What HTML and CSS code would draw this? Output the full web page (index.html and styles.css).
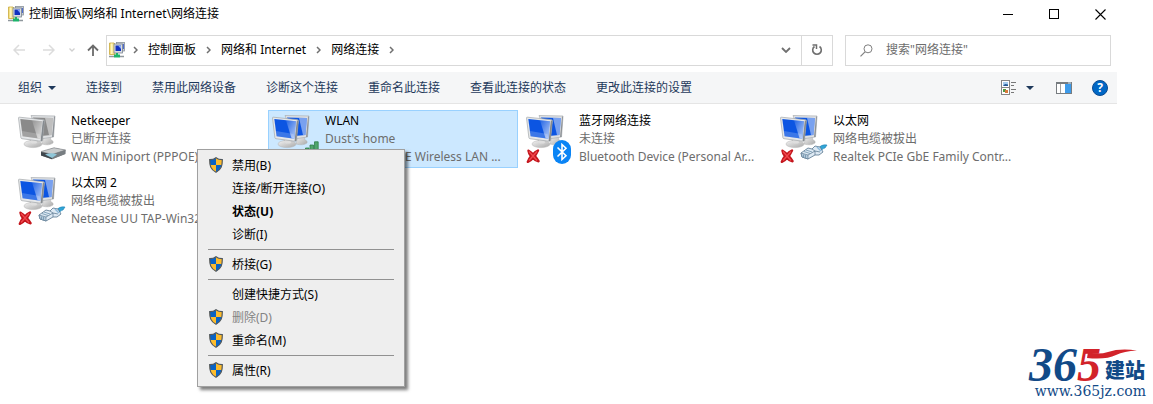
FILE: index.html
```html
<!DOCTYPE html>
<html lang="zh-CN">
<head>
    <meta charset="UTF-8">
    <meta name="viewport" content="width=device-width, initial-scale=1.0">
    <title>网络连接</title>
    <link rel="stylesheet" href="styles.css">
</head>
<body>
    <!-- Shared icons -->
    <svg class="sprite" width="0" height="0" aria-hidden="true">
        <defs>
            <linearGradient id="stand" x1="0" y1="0" x2="1" y2="1">
                <stop offset="0" stop-color="#f4f4f4"/>
                <stop offset="1" stop-color="#a8a8a8"/>
            </linearGradient>
            <linearGradient id="glare" x1="0" y1="0" x2="1" y2="1">
                <stop offset="0" stop-color="#fff" stop-opacity="0.1"/>
                <stop offset="1" stop-color="#fff" stop-opacity="0.7"/>
            </linearGradient>
            <symbol id="monitors" viewBox="0 0 48 52">
                <path d="M26 24 L32 24 L33 28 Q36 29 35 31 Q31 34 24 32 Z" fill="url(#stand)" stroke="#b0b0b0" stroke-width="0.5"/>
                <path d="M13 3.500 L37 4 L35.500 25 L22 27 Z" fill="#dfe1e3" stroke="#a9adb1" stroke-width="0.7"/>
                <path d="M15 5.500 L35 6 L33.500 23 L23 24 Z" fill="currentColor"/>
                <path d="M27 6 L35 6 L33.500 23 L31 23 Z" fill="#fff" opacity="0.45"/>
                <path d="M36 5 L37 4 L35.500 25 L34 25 Z" fill="#8e9297"/>
                <path d="M11 25 L19 26 L20 30 L12 30 Z" fill="#c8c8c8"/>
                <ellipse cx="15" cy="32" rx="9" ry="3.600" fill="url(#stand)" stroke="#b4b4b4" stroke-width="0.5"/>
                <path d="M13 26 L18 27 L19 31 Q16 32 13 31 Z" fill="#dedede"/>
                <path d="M0.500 6 Q0.500 5 1.500 5.200 L25.500 7.700 Q26.500 7.900 26.400 8.900 L24.400 28.500 Q24.200 29.500 23.200 29.300 L4 26.700 Q3 26.500 2.900 25.700 Z" fill="#e6e8ea" stroke="#a3a7ab" stroke-width="0.7"/>
                <path d="M26.500 8.500 L24.300 29 L22.600 29 L24.800 8.500 Z" fill="#868b90"/>
                <path d="M2.300 7 L24 9.300 L22.300 26.700 L4.600 24.200 Z" fill="currentColor"/>
                <path d="M14 8.300 L24 9.300 L22.300 26.700 L19.500 26.300 Z" fill="url(#glare)"/>
                <path d="M4 19 L21.500 22 L22.300 26.700 L4.600 24.200 Z" fill="#fff" opacity="0.2"/>
            </symbol>
            <symbol id="cross" viewBox="0 0 14 14">
                <path d="M2.500 1.800 Q5.500 3.500 7 5.500 Q9 2.800 12 1.500 Q10.500 4.500 8.800 7 Q11 9.500 12.500 12.200 Q9 11.500 6.900 9 Q5 11.500 1.800 12.800 Q3 9.500 5 7.200 Q3 5 2.500 1.800 Z" fill="#d71f27" stroke="#c3151c" stroke-width="2.400" stroke-linejoin="round"/>
                <path d="M3 2.500 L11 11.500 M11 2.500 L3 11.500" stroke="#f0474d" stroke-width="1.400"/>
            </symbol>
            <symbol id="cable" viewBox="0 0 28 18">
                <path d="M18 6 Q21 1 27 2 L25 5 Q22 5 21 9 Z" fill="#31a5d6" stroke="#1d80b4" stroke-width="0.6"/>
                <path d="M1 10 L8 5 L12 6 L15 3 L20 4 L23 9 L19 12 L15 12 L8 16 L2 14 Z" fill="#dde9f3" stroke="#56748d" stroke-width="0.8"/>
                <path d="M1 10 L8 12 L8 16 L2 14 Z" fill="#b5cada" stroke="#56748d" stroke-width="0.6"/>
                <path d="M8 12 L15 8 L20 9 M12 6 L15 8 M15 8 L15 12" fill="none" stroke="#56748d" stroke-width="0.7"/>
                <path d="M4 8.500 L10 10.500 M6 7 L12 9 M3.500 11.500 V14 M5.500 12 V15" stroke="#6f93ad" stroke-width="0.8"/>
                <path d="M17 4 L21 8" stroke="#8cb9dc" stroke-width="1.500"/>
            </symbol>
            <symbol id="shield" viewBox="0 0 14 16">
                <path d="M7 0.700 C5.500 2 3 2.700 0.700 2.700 C0.600 8.500 1.500 12.500 7 15.300 C12.500 12.500 13.400 8.500 13.300 2.700 C11 2.700 8.500 2 7 0.700 Z" fill="#fdbc2c"/>
                <path d="M7 1 C5.500 2 3 2.700 1 2.800 Q0.900 6 1.400 8 H7 Z" fill="#0a63c4"/>
                <path d="M7 8 H12.600 C11.800 11.500 10 13.700 7 15.200 Z" fill="#0a63c4"/>
                <path d="M7 0.700 C5.500 2 3 2.700 0.700 2.700 C0.600 8.500 1.500 12.500 7 15.300 C12.500 12.500 13.400 8.500 13.300 2.700 C11 2.700 8.500 2 7 0.700 Z" fill="none" stroke="#505860" stroke-width="1.200"/>
            </symbol>
            <symbol id="net-folder" viewBox="0 0 16 16">
                <path d="M0.500 1 H5 L6 2 V12.500 H0.500 Z" fill="#f5e184" stroke="#c9a93e" stroke-width="0.800"/>
                <path d="M2 1.500 H3.500 V12 H2 Z" fill="#fff6bd"/>
                <rect x="7.500" y="0.500" width="8" height="8.500" fill="#c9cfd6" stroke="#8a929b" stroke-width="0.800"/>
                <path d="M13.500 2 H15 V7 H13.500 Z" fill="#4e6bd2"/>
                <rect x="5" y="2" width="8.500" height="9" fill="#d8dde3" stroke="#7a838e" stroke-width="0.800"/>
                <rect x="6.500" y="3.500" width="5.500" height="5.500" fill="#1231c0"/>
                <path d="M9 3.500 H12 V7 Z" fill="#88a8f5"/>
                <path d="M7 11 H9 V12.500 H11 V15.500 H5 V12.500 H7 Z" fill="#1cb36b"/>
                <path d="M0 14.500 H5 M11 14.500 H15" stroke="#8f979d" stroke-width="1.500"/>
            </symbol>
            <symbol id="crumb" viewBox="0 0 5 8">
                <path d="M1 1 L4 4 L1 7" fill="none" stroke="#707070" stroke-width="1.500"/>
            </symbol>
            <symbol id="caret" viewBox="0 0 8 4">
                <path d="M0 0 H8 L4 4 Z" fill="#1e395b"/>
            </symbol>
        </defs>
    </svg>

    <div class="window">
        <header class="titlebar">
            <svg class="icon16"><use href="#net-folder"/></svg>
            <h1 class="title">控制面板\网络和 Internet\网络连接</h1>
            <div class="window-buttons">
                <button type="button" aria-label="最小化"><svg width="10" height="10"><path d="M0 5.500 H10" stroke="#000"/></svg></button>
                <button type="button" aria-label="最大化"><svg width="10" height="10"><rect x="0.500" y="0.500" width="9" height="9" fill="none" stroke="#000"/></svg></button>
                <button type="button" aria-label="关闭"><svg width="11" height="11"><path d="M0.500 0.500 L10.500 10.500 M10.500 0.500 L0.500 10.500" stroke="#000" stroke-width="1.100"/></svg></button>
            </div>
        </header>

        <div class="navbar">
            <div class="history">
                <button type="button" aria-label="后退"><svg width="12" height="12"><path d="M12 6 H1 M6 1 L1 6 L6 11" fill="none" stroke="#dcdcdc" stroke-width="1.500"/></svg></button>
                <button type="button" aria-label="前进"><svg width="12" height="12"><path d="M0 6 H11 M6 1 L11 6 L6 11" fill="none" stroke="#dcdcdc" stroke-width="1.500"/></svg></button>
                <button type="button" class="recent" aria-label="最近位置"><svg width="6" height="4"><path d="M0.500 0.500 L3 3 L5.500 0.500" fill="none" stroke="#d0d0d0" stroke-width="1.300"/></svg></button>
                <button type="button" aria-label="向上"><svg width="12" height="12"><path d="M6 12 V1.500 M1 6.500 L6 1.500 L11 6.500" fill="none" stroke="#6b6b6b" stroke-width="1.800"/></svg></button>
            </div>
            <div class="address">
                <svg class="icon16"><use href="#net-folder"/></svg>
                <nav class="crumbs">
                    <svg class="crumb"><use href="#crumb"/></svg>
                    <a href="#">控制面板</a>
                    <svg class="crumb"><use href="#crumb"/></svg>
                    <a href="#">网络和 Internet</a>
                    <svg class="crumb"><use href="#crumb"/></svg>
                    <a href="#">网络连接</a>
                    <svg class="crumb"><use href="#crumb"/></svg>
                </nav>
                <button type="button" class="history-drop" aria-label="历史记录"><svg width="10" height="6"><path d="M1 1 L5 5 L9 1" fill="none" stroke="#707070" stroke-width="1.800"/></svg></button>
                <button type="button" class="refresh" aria-label="刷新"><svg width="12" height="12"><path d="M8.500 2.500 A4.300 4.300 0 1 1 3.500 2.500" fill="none" stroke="#6f6f6f" stroke-width="1.600"/><path d="M1.500 1 H5.500 V5" fill="none" stroke="#6f6f6f" stroke-width="1.500"/></svg></button>
            </div>
            <label class="search">
                <svg width="13" height="13"><circle cx="8" cy="4.800" r="4" fill="none" stroke="#808080"/><path d="M5 7.800 L0.500 12.300" stroke="#808080" stroke-width="1.200"/></svg>
                <input type="text" placeholder='搜索"网络连接"' aria-label="搜索">
            </label>
        </div>

        <div class="toolbar">
            <button type="button">组织<svg class="caret"><use href="#caret"/></svg></button>
            <button type="button">连接到</button>
            <button type="button">禁用此网络设备</button>
            <button type="button">诊断这个连接</button>
            <button type="button">重命名此连接</button>
            <button type="button">查看此连接的状态</button>
            <button type="button">更改此连接的设置</button>
            <div class="view-buttons">
                <button type="button" class="views" aria-label="更改视图">
                    <svg width="16" height="16">
                        <rect x="0.500" y="0.500" width="8" height="14" fill="#fff" stroke="#858585"/>
                        <path d="M0.500 7.500 H8.500" stroke="#858585"/>
                        <rect x="2" y="2" width="5" height="4" fill="#a5cdf0"/><path d="M2 6 L4 4 L7 4.500 V6 Z" fill="#245894"/>
                        <rect x="2" y="9" width="3" height="3" fill="#4d9a43"/><rect x="4" y="10" width="3" height="3" fill="#d9793c"/>
                        <path d="M10 2.500 H15 M10 5.500 H13 M10 9.500 H15 M10 12.500 H13" stroke="#777"/>
                    </svg>
                    <svg class="caret"><use href="#caret"/></svg>
                </button>
                <button type="button" aria-label="预览窗格">
                    <svg width="16" height="12"><rect x="0.500" y="0.500" width="15" height="11" fill="#fff" stroke="#777c80"/><path d="M0 1.500 H16" stroke="#777c80"/><path d="M4.500 2 V11" stroke="#a3a3a3"/><rect x="9" y="2" width="6" height="9" fill="#3d9bea"/><path d="M12 1 H15" stroke="#c9e3f8"/></svg>
                </button>
                <button type="button" class="help" aria-label="帮助">?</button>
            </div>
        </div>

        <main class="connections">
            <article class="connection offline">
                <div class="art">
                    <svg class="monitors"><use href="#monitors"/></svg>
                    <svg class="badge-modem" viewBox="0 0 26 13">
                        <path d="M1 5 L14 0.800 L25.500 3 L25 7 L12 12.300 L1 8.500 Z" fill="#888d90"/>
                        <path d="M1 4.500 L14 0.800 L25.500 3 L12 7.500 Z" fill="#c9cccd" stroke="#7d8184" stroke-width="0.600"/>
                        <path d="M1 5 L12 7.500 V12.300 L1 8.500 Z" fill="#3f474d"/>
                        <path d="M12 7.500 L25.500 3 V7 L12 12.300 Z" fill="#777d81"/>
                        <path d="M5 7.500 Q12 5 17 7.500 L12 11 Z" fill="#8fc6d8"/>
                    </svg>
                </div>
                <div class="details"><h2>Netkeeper</h2><p>已断开连接</p><p>WAN Miniport (PPPOE)</p></div>
            </article>
            <article class="connection selected">
                <div class="art">
                    <svg class="monitors"><use href="#monitors"/></svg>
                    <svg class="badge-signal" viewBox="0 0 14 16"><path d="M0.500 7 H4 V15.500 H0.500 Z M5 4 H8.500 V15.500 H5 Z M9.500 0.800 H13.200 V15.500 H9.500 Z" fill="#50a56b" stroke="#2f7d4a" stroke-width="0.800"/></svg>
                </div>
                <div class="details"><h2>WLAN</h2><p>Dust's home</p><p>Realtek 8822BE Wireless LAN ...</p></div>
            </article>
            <article class="connection">
                <div class="art">
                    <svg class="monitors"><use href="#monitors"/></svg>
                    <svg class="badge-cross"><use href="#cross"/></svg>
                    <svg class="badge-bluetooth" viewBox="0 0 18 24"><rect width="18" height="24" rx="9" fill="#0a84f5"/><path d="M4.500 7.500 L13 15.800 L9 19.500 V4.500 L13 8.200 L4.500 16.500" fill="none" stroke="#fff" stroke-width="1.600"/></svg>
                </div>
                <div class="details"><h2>蓝牙网络连接</h2><p>未连接</p><p>Bluetooth Device (Personal Ar...</p></div>
            </article>
            <article class="connection">
                <div class="art">
                    <svg class="monitors"><use href="#monitors"/></svg>
                    <svg class="badge-cross"><use href="#cross"/></svg>
                    <svg class="badge-cable"><use href="#cable"/></svg>
                </div>
                <div class="details"><h2>以太网</h2><p>网络电缆被拔出</p><p>Realtek PCIe GbE Family Contr...</p></div>
            </article>
            <article class="connection">
                <div class="art">
                    <svg class="monitors"><use href="#monitors"/></svg>
                    <svg class="badge-cross"><use href="#cross"/></svg>
                    <svg class="badge-cable"><use href="#cable"/></svg>
                </div>
                <div class="details"><h2>以太网 2</h2><p>网络电缆被拔出</p><p>Netease UU TAP-Win32 ...</p></div>
            </article>
        </main>

        <div class="menu" role="menu">
            <button type="button" role="menuitem"><svg><use href="#shield"/></svg>禁用(B)</button>
            <button type="button" role="menuitem">连接/断开连接(O)</button>
            <button type="button" role="menuitem" class="default">状态(U)</button>
            <button type="button" role="menuitem">诊断(I)</button>
            <hr>
            <button type="button" role="menuitem"><svg><use href="#shield"/></svg>桥接(G)</button>
            <hr>
            <button type="button" role="menuitem">创建快捷方式(S)</button>
            <button type="button" role="menuitem" disabled><svg><use href="#shield"/></svg>删除(D)</button>
            <button type="button" role="menuitem"><svg><use href="#shield"/></svg>重命名(M)</button>
            <hr>
            <button type="button" role="menuitem"><svg><use href="#shield"/></svg>属性(R)</button>
        </div>
    </div>

    <a class="site-logo" href="#">
        <span class="brand">
            <span class="digits">36<span class="five">5</span></span>
            <svg class="swash" viewBox="0 0 52 12"><path d="M2 3 Q12 6 22 3 Q34 -1 51 1.500 Q38 2 30 6 Q20 11 1 9 Z" fill="#d2232a"/></svg>
            <span class="brand-name">建站</span>
        </span>
        <span class="site-url">www.365jz.com</span>
    </a>
</body>
</html>
```

FILE: styles.css
```css
* {
    box-sizing: border-box;
    margin: 0;
    padding: 0;
}

body {
    min-height: 100vh;
    position: relative;
    background: #fff;
    color: #000;
    font-family: "Noto Sans", "Noto Sans CJK SC", sans-serif;
    font-size: 12px;
    line-height: 18px;
}

button {
    border: 0;
    background: none;
    color: inherit;
    font: inherit;
    display: flex;
    align-items: center;
}

a {
    color: inherit;
    text-decoration: none;
}

svg {
    display: block;
    flex: none;
}

.sprite {
    position: absolute;
}

.window {
    margin-right: 30px;
    position: relative;
}

.icon16 {
    width: 16px;
    height: 16px;
}

/* Title bar */
.titlebar {
    height: 28px;
    padding-left: 8px;
    display: flex;
    align-items: center;
}

.title {
    margin-left: 5px;
    font-size: 12px;
    font-weight: normal;
}

.window-buttons {
    margin-left: auto;
    display: flex;
}

.window-buttons button {
    width: 46px;
    height: 28px;
    justify-content: center;
}

/* Navigation row */
.navbar {
    height: 44px;
    padding: 0 12px 0 13px;
    display: flex;
    align-items: center;
}

.history {
    display: flex;
    align-items: center;
    gap: 18px;
    margin-right: 7px;
}

.history .recent {
    margin: 0 -6px 0 -4px;
}

.address {
    flex: 1;
    height: 31px;
    display: flex;
    align-items: center;
    border: 1px solid #d9d9d9;
    padding-left: 2px;
}

.crumbs {
    flex: 1;
    display: flex;
    align-items: center;
    gap: 10px;
    margin-left: 8px;
}

.crumb {
    width: 5px;
    height: 8px;
}

.history-drop,
.refresh {
    height: 100%;
    width: 30px;
    justify-content: center;
}

.refresh {
    width: 31px;
    border-left: 1px solid #d9d9d9;
}

.search {
    width: 266px;
    height: 31px;
    margin-left: 12px;
    padding: 0 14px;
    display: flex;
    align-items: center;
    gap: 13px;
    border: 1px solid #d9d9d9;
}

.search input {
    flex: 1;
    min-width: 0;
    border: 0;
    outline: 0;
    background: none;
    font: inherit;
}

.search input::placeholder {
    color: #6d6d6d;
    opacity: 1;
}

/* Command bar */
.toolbar {
    height: 32px;
    margin-right: 6px;
    padding: 0 9px 0 18px;
    display: flex;
    align-items: center;
    gap: 30px;
    background: #f5f6f7;
    border-bottom: 1px solid #e5e5e5;
    color: #1e395b;
}

.toolbar button {
    gap: 6px;
    white-space: nowrap;
}

.caret {
    width: 8px;
    height: 4px;
}

.view-buttons {
    margin-left: auto;
    display: flex;
    align-items: center;
    gap: 20px;
}

.toolbar .views {
    gap: 9px;
    margin-right: 2px;
}

.toolbar .help {
    width: 16px;
    height: 16px;
    border: 1px solid #0a4a90;
    border-radius: 50%;
    background: #0067c5;
    color: #fff;
    font-weight: bold;
    justify-content: center;
}

/* Connection tiles */
.connections {
    display: grid;
    grid-template-columns: repeat(auto-fill, 250px);
    gap: 4px;
    padding: 6px 14px;
}

.connection {
    display: flex;
    gap: 5px;
    height: 58px;
    padding: 1px 3px;
    border: 1px solid transparent;
    color: #0c55e2;
}

.connection.offline {
    color: #8a8a8a;
}

.connection.selected {
    background: #cce8ff;
    border-color: #99d1ff;
}

.art {
    position: relative;
    flex: none;
    width: 48px;
    height: 52px;
}

.monitors {
    width: 48px;
    height: 52px;
}

.badge-modem {
    position: absolute;
    left: 22px;
    top: 35px;
    width: 26px;
    height: 13px;
}

.badge-signal {
    position: absolute;
    left: 33px;
    top: 29px;
    width: 14px;
    height: 16px;
}

.badge-cross {
    position: absolute;
    left: 0;
    top: 37px;
    width: 14px;
    height: 14px;
}

.badge-cable {
    position: absolute;
    left: 20px;
    top: 31px;
    width: 28px;
    height: 18px;
}

.badge-bluetooth {
    position: absolute;
    left: 27px;
    top: 28px;
    width: 18px;
    height: 24px;
}

.details {
    flex: 1;
    min-width: 0;
}

.details h2,
.details p {
    overflow: hidden;
    font-size: 12px;
    font-weight: normal;
    text-overflow: ellipsis;
    white-space: nowrap;
}

.details h2 {
    color: #000;
}

.details p {
    color: #6d6d6d;
}

/* Context menu */
.menu {
    position: absolute;
    left: 197px;
    top: 149px;
    width: 208px;
    padding: 4px 0;
    border: 1px solid #a0a0a0;
    background: #eee;
    box-shadow: 3px 3px 3px rgba(0, 0, 0, 0.5);
}

.menu button {
    position: relative;
    width: 100%;
    height: 23px;
    padding-left: 34px;
}

.menu button:disabled {
    color: #838383;
}

.menu .default {
    font-weight: bold;
}

.menu svg {
    position: absolute;
    left: 11px;
    top: 3px;
    width: 14px;
    height: 16px;
}

.menu hr {
    height: 1px;
    margin: 3px 10px;
    border: 0;
    background: #919191;
}

/* Site logo */
.site-logo {
    position: absolute;
    right: 7px;
    bottom: 4px;
    color: #124a87;
}

.brand {
    display: flex;
    align-items: center;
    justify-content: flex-end;
    height: 34px;
    position: relative;
}

.digits {
    font: italic bold 48px/34px "Liberation Serif", serif;
}

.five {
    color: #d2232a;
}

.swash {
    position: absolute;
    right: 8px;
    top: 1px;
    width: 52px;
    height: 12px;
}

.brand-name {
    margin: 12px 1px 0 4px;
    font-size: 20px;
    font-weight: 900;
    line-height: 22px;
}

.site-url {
    display: block;
    font: 14px/18px "DejaVu Serif", serif;
    text-align: right;
}
```
